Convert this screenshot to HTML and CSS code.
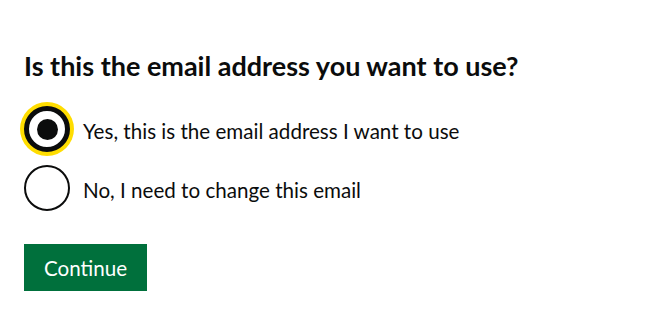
FILE: index.html
```html
<!DOCTYPE html>
<html lang="en">
<head>
<meta charset="utf-8">
<title>Email address</title>
<link rel="stylesheet" href="styles.css">
</head>
<body>
<main class="page">
  <form class="form">
    <fieldset class="fieldset">
      <legend class="legend"><h1 class="heading">Is this the email address you want to use?</h1></legend>
      <div class="radios">
        <label class="radio radio--checked radio--focused">
          <span class="radio__circle"><span class="radio__dot"></span></span>
          <span class="radio__label">Yes, this is the email address I want to use</span>
        </label>
        <label class="radio">
          <span class="radio__circle"></span>
          <span class="radio__label">No, I need to change this email</span>
        </label>
      </div>
    </fieldset>
    <button type="button" class="button">Continue</button>
  </form>
</main>
</body>
</html>
```

FILE: styles.css
```css
* { box-sizing: border-box; }
html, body { margin: 0; padding: 0; background: #ffffff; }
body {
  font-family: Lato, "Noto Sans", sans-serif;
  color: #0b0c0c;
}
.page { padding: 48px 24px 0 24px; }
.form { display: flex; flex-direction: column; align-items: flex-start; }
.fieldset { border: 0; margin: 0; padding: 0; min-width: 0; }
.legend { padding: 0; margin: 0; }
.heading {
  margin: 0;
  font-size: 27px;
  line-height: 36px;
  font-weight: 700;
  letter-spacing: 0;
}
.radios {
  display: flex;
  flex-direction: column;
  gap: 13px;
  margin-top: 22px;
}
.radio {
  display: flex;
  align-items: center;
  gap: 13px;
  min-height: 46px;
}
.radio__circle {
  width: 46px;
  height: 46px;
  border-radius: 50%;
  border: 2px solid #0b0c0c;
  display: flex;
  align-items: center;
  justify-content: center;
  flex: none;
  background: #ffffff;
}
.radio--focused .radio__circle {
  border-width: 5px;
  box-shadow: 0 0 0 4px #ffdd00;
}
.radio__dot {
  width: 21px;
  height: 21px;
  border-radius: 50%;
  background: #0b0c0c;
}
.radio__label {
  font-size: 20.6px;
  line-height: 26px;
  padding-top: 3px;
}
.button {
  margin-top: 33px;
  margin-left: 0;
  font-family: inherit;
  font-size: 20.6px;
  line-height: 26px;
  color: #ffffff;
  background: #00703c;
  border: 0;
  border-radius: 0;
  padding: 11px 20px 10px 20px;
  box-shadow: 0 3px 0 #002d18;
  cursor: pointer;
}
```
